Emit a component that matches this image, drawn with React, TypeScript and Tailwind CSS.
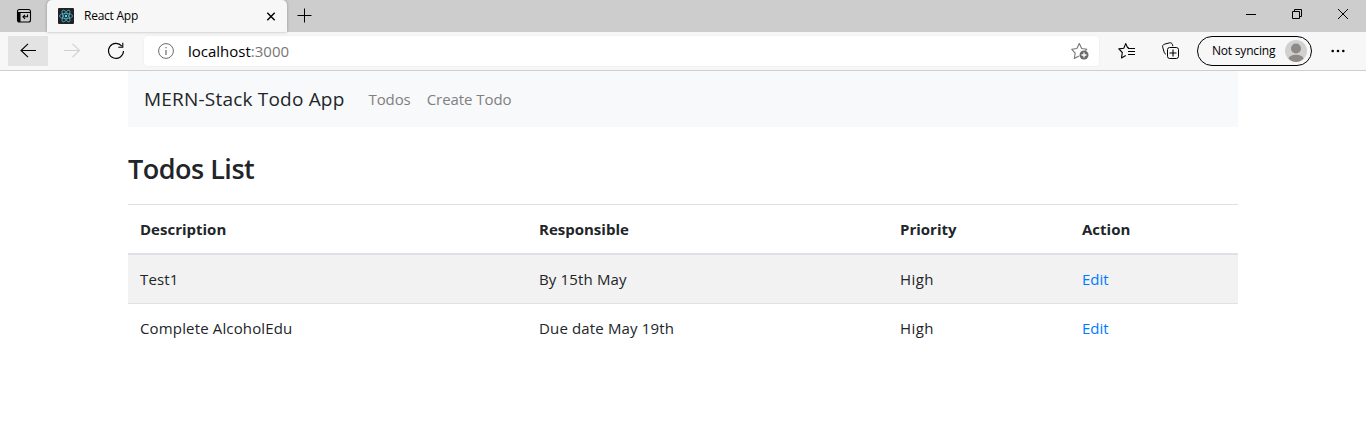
import React from 'react';

const todos = [
  { description: 'Test1', responsible: 'By 15th May', priority: 'High' },
  { description: 'Complete AlcoholEdu', responsible: 'Due date May 19th', priority: 'High' },
];

function TabStrip() {
  return (
    <div className="flex h-8 items-start bg-[#cdcdcd] pl-4 text-black">
      <svg className="mt-2 size-4 shrink-0" viewBox="0 0 16 16" fill="none" stroke="currentColor">
        <rect x="1.5" y="1.5" width="13" height="12.5" rx="2" strokeWidth="1.1" />
        <path d="M1.5 4.5h13" />
        <path d="M2 4.5h2.5V14H3a1 1 0 0 1-1-1z" fill="currentColor" stroke="none" />
        <path d="M11.500 6.500v2.300H7M9 6.800 7 8.800l2 2" strokeWidth="1.1" />
      </svg>
      <div className="ml-[15px] flex h-8 w-[240px] shrink-0 items-center rounded-t-[5px] bg-[#f7f7f7] pr-[11px] pl-[11px] shadow-[0_0_3px_rgba(0,0,0,0.3)]">
        <svg className="size-4" viewBox="0 0 16 16" fill="none" stroke="#4fb0ca" strokeWidth="0.8">
          <rect width="16" height="16" rx="1" fill="#222222" stroke="none" />
          <ellipse cx="8" cy="8" rx="6.6" ry="2.6" />
          <ellipse cx="8" cy="8" rx="6.6" ry="2.6" transform="rotate(60 8 8)" />
          <ellipse cx="8" cy="8" rx="6.6" ry="2.6" transform="rotate(120 8 8)" />
          <circle cx="8" cy="8" r="1.2" fill="#61dafb" stroke="none" />
        </svg>
        <span className="ml-[10px] flex-1 text-[12px] tracking-[-0.25px]">React App</span>
        <svg className="size-[10px]" viewBox="0 0 10 10" stroke="currentColor" strokeWidth="1.4">
          <path d="M1.300 1.800l7.400 7.400M8.700 1.800 1.300 9.200" />
        </svg>
      </div>
      <svg className="mt-2 ml-[10px] size-4" viewBox="0 0 16 16" stroke="currentColor" strokeWidth="1">
        <path d="M0.500 7.500h14M7.500 .5v14" />
      </svg>
      <div className="ml-auto flex pt-2 pr-[17px]">
        <svg className="h-3 w-3" viewBox="0 0 12 12" stroke="currentColor"><path d="M1 6.5h10" /></svg>
        <svg className="ml-[34px] h-3 w-3" viewBox="0 0 12 12" fill="none" stroke="currentColor">
          <path d="M1.5 3.5h7v7h-7zM3.5 3.5v-2h7v7h-2" />
        </svg>
        <svg className="ml-[34px] h-3 w-3" viewBox="0 0 12 12" stroke="currentColor"><path d="M1 1l10 10M11 1 1 11" /></svg>
      </div>
    </div>
  );
}

function Toolbar() {
  return (
    <div className="flex h-[39px] items-center border-b border-[#cecece] bg-[#f7f7f7] pb-px pl-2 text-black">
      <div className="flex h-[30px] w-10 items-center justify-center bg-[#e3e3e3]">
        <svg className="h-4 w-4" viewBox="0 0 16 16" fill="none" stroke="currentColor" strokeWidth="1.1">
          <path d="M16 7.5H1M8 .8 1 7.5l7 6.7" />
        </svg>
      </div>
      <svg className="ml-4 h-4 w-4" viewBox="0 0 16 16" fill="none" stroke="#cfcfcf" strokeWidth="1.1">
        <path d="M0 7.5h15M8.5.8l7 6.7-7 6.7" />
      </svg>
      <svg className="ml-[27px] h-[18px] w-[18px]" viewBox="0 0 18 18" fill="none" stroke="currentColor" strokeWidth="1.1">
        <path d="M14.8 4.1A7.5 7.5 0 1 0 16.5 9M15.8 .8v4.5h-4.5" />
      </svg>
      <div className="ml-[19px] flex h-[30px] w-[955px] shrink-0 items-center rounded-[4px] bg-white pr-[10px] pl-[14px] shadow-[0_0_2px_rgba(0,0,0,0.08)]">
        <svg className="size-4" viewBox="0 0 16 16" fill="none" stroke="#6b6b6b">
          <circle cx="8" cy="8" r="7.4" />
          <path d="M8 7v5M8 4v1.3" strokeWidth="1.2" />
        </svg>
        <span className="ml-[14px] flex-1 pt-px text-[15px]">
          localhost<span className="text-[#767676]">:3000</span>
        </span>
        <svg className="h-[18px] w-[18px]" viewBox="0 0 18 18" fill="none" stroke="#767676" strokeWidth="1.1">
          <path d="M8 14.1l-4.7 2.4.9-5.4L.8 7.3l5.1-.8L8.3 1.6l2.400 4.900 5.100.8-1.500 1.400" strokeLinejoin="round" />
          <circle cx="13" cy="13" r="4.5" fill="#6b6b6b" stroke="none" />
          <path d="M10.5 13h5M13 10.500v5" stroke="white" strokeWidth="1.3" />
        </svg>
      </div>
      <svg className="ml-[19px] h-[18px] w-[17px]" viewBox="0 0 17 18" fill="none" stroke="currentColor" strokeWidth="1.1">
        <path d="M11 5.700H9.600L7.700 1.600 5.800 6.300.8 6.900l3.500 3.600-.8 5.400 4.300-2.300" strokeLinejoin="round" />
        <path d="M10 6.500h7M10 9.500h7M10 12.500h7" strokeWidth="1" />
      </svg>
      <svg className="ml-[27px] h-[18px] w-[18px]" viewBox="0 0 18 18" fill="none" stroke="currentColor" strokeWidth="1">
        <path d="M4 12.200C2.700 11.800 2.400 11 2.100 10L.7 5.200C.3 3.700 1 2.700 2.500 2.200L7.300.9c1.500-.4 2.700.2 3.100 1.500l.5 1.800" />
        <rect x="5.500" y="5.500" width="11" height="11" rx="2.200" />
        <path d="M11 7.500v7M7.500 11h7" strokeWidth="1.1" />
      </svg>
      <div className="ml-[17px] flex h-[30px] w-[115px] items-center rounded-full border border-black pr-1 pl-[14px]">
        <span className="flex-1 pt-px text-[12px] whitespace-nowrap tracking-[-0.2px]">Not syncing</span>
        <svg className="size-[22px] shrink-0" viewBox="0 0 22 22">
          <circle cx="11" cy="11" r="11" fill="#d2d0ce" />
          <circle cx="11" cy="8.500" r="5" fill="#8d8a87" />
          <path d="M3.500 18.500c1.500-5 13.500-5 15 0-3.500 4.500-11.500 4.500-15 0z" fill="#8d8a87" />
        </svg>
      </div>
      <svg className="ml-[19px] h-4 w-[14px]" viewBox="0 0 14 16" fill="currentColor">
        <circle cx="1.700" cy="8" r="1.300" />
        <circle cx="7" cy="8" r="1.300" />
        <circle cx="12.300" cy="8" r="1.300" />
      </svg>
    </div>
  );
}

export default function App() {
  return (
    <div className="h-[434px] overflow-hidden bg-white font-['Open_Sans','Noto_Sans',sans-serif] text-[#212529]">
      <TabStrip />
      <Toolbar />
      <main className="mx-auto w-[1110px]">
        <nav className="flex h-14 items-center bg-[#f8f9fa] px-4">
          <a className="mr-6 text-[19px] leading-[30px] tracking-[0.2px] whitespace-nowrap">MERN-Stack Todo App</a>
          <a className="mr-4 text-[15px] tracking-[-0.1px] whitespace-nowrap text-[#7f8081]">Todos</a>
          <a className="text-[15px] tracking-[-0.05px] whitespace-nowrap text-[#7f8081]">Create Todo</a>
        </nav>
        <h3 className="mt-[25px] mb-[19px] text-[27px] leading-[33px] font-semibold tracking-[-0.5px]">Todos List</h3>
        <table className="w-full table-fixed border-collapse text-left text-[15px] leading-6">
          <colgroup>
            <col className="w-[399px]" />
            <col className="w-[361px]" />
            <col className="w-[182px]" />
            <col className="w-[168px]" />
          </colgroup>
          <thead>
            <tr className="h-[49px] border-t border-b-2 border-[#dee2e6] font-bold">
              <th className="px-3 pt-px">Description</th>
              <th className="px-3 pt-px">Responsible</th>
              <th className="px-3 pt-px">Priority</th>
              <th className="px-3 pt-px">Action</th>
            </tr>
          </thead>
          <tbody>
            {todos.map((todo) => (
              <tr key={todo.description} className="border-[#dee2e6] odd:h-[50px] odd:bg-[#f2f2f2] even:h-[49px] even:border-t">
                <td className="px-3 tracking-[0.15px]">{todo.description}</td>
                <td className="px-3 tracking-[0.15px]">{todo.responsible}</td>
                <td className="px-3 tracking-[0.4px]">{todo.priority}</td>
                <td className="px-3"><a className="text-[#007bff]">Edit</a></td>
              </tr>
            ))}
          </tbody>
        </table>
      </main>
    </div>
  );
}
